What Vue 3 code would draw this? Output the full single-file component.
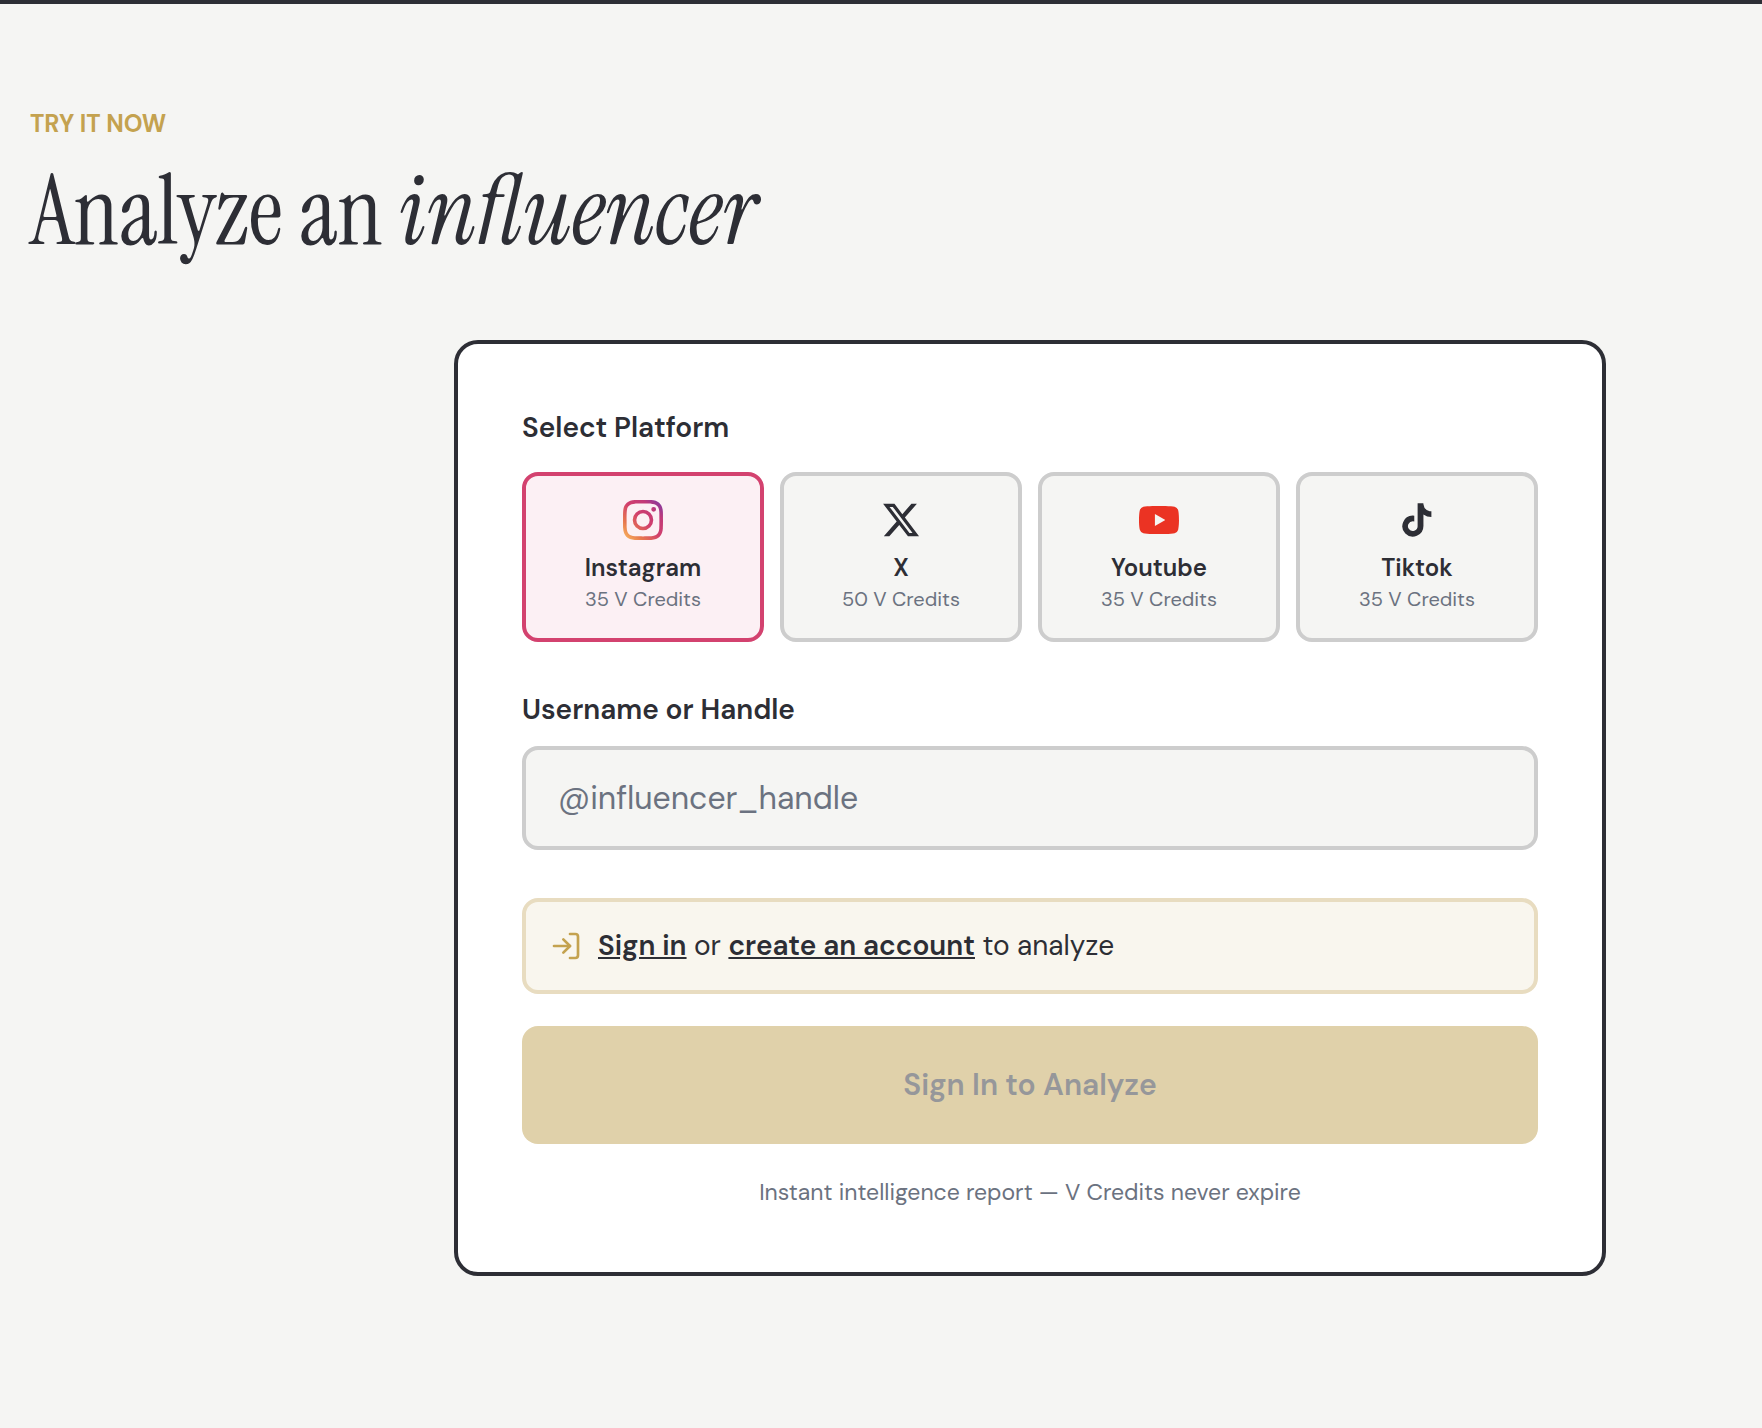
<template>
  <main class="page">
    <section class="analyze">
      <header class="section-header">
        <p class="eyebrow">TRY IT NOW</p>
        <h2 class="title">Analyze an <em>influencer</em></h2>
      </header>

      <form class="card" @submit.prevent>
        <div class="group-label" id="platform-label">Select Platform</div>
        <div class="platforms" role="group" aria-labelledby="platform-label">
          <button
            v-for="platform in platforms"
            :key="platform.id"
            type="button"
            class="platform"
            :class="{ active: selected === platform.id }"
            :aria-pressed="selected === platform.id"
            @click="selected = platform.id"
          >
            <svg class="platform-icon" :class="platform.id" viewBox="0 0 24 24" aria-hidden="true">
              <defs v-if="platform.id === 'instagram'">
                <linearGradient id="ig-gradient" x1="0%" y1="100%" x2="100%" y2="0%">
                  <stop offset="0%" stop-color="#fcc05f" />
                  <stop offset="25%" stop-color="#e7774f" />
                  <stop offset="50%" stop-color="#d2406c" />
                  <stop offset="75%" stop-color="#c23a78" />
                  <stop offset="100%" stop-color="#7238ac" />
                </linearGradient>
              </defs>
              <path :d="platform.icon" />
            </svg>
            <span class="platform-name">{{ platform.name }}</span>
            <span class="platform-cost">{{ platform.cost }} V Credits</span>
          </button>
        </div>

        <label class="group-label handle-label" for="handle">Username or Handle</label>
        <input id="handle" v-model="handle" class="handle-input" type="text" placeholder="@influencer_handle" />

        <div class="notice">
          <svg class="notice-icon" viewBox="0 0 24 24" fill="none" stroke="currentColor" stroke-width="2" stroke-linecap="round" stroke-linejoin="round" aria-hidden="true">
            <path d="M15 3h4a2 2 0 0 1 2 2v14a2 2 0 0 1-2 2h-4"></path>
            <polyline points="10 17 15 12 10 7"></polyline>
            <line x1="15" y1="12" x2="3" y2="12"></line>
          </svg>
          <p><a href="#signin">Sign in</a> or <a href="#signup">create an account</a> to analyze</p>
        </div>

        <button class="submit-btn" type="submit" disabled>Sign In to Analyze</button>
        <p class="footnote">Instant intelligence report — V Credits never expire</p>
      </form>
    </section>
  </main>
</template>

<script setup>
import { ref } from 'vue'

const selected = ref('instagram')
const handle = ref('')

const platforms = [
  {
    id: 'instagram',
    name: 'Instagram',
    cost: 35,
    icon: 'M12 2.163c3.204 0 3.584.012 4.85.07 3.252.148 4.771 1.691 4.919 4.919.058 1.265.069 1.645.069 4.849 0 3.205-.012 3.584-.069 4.849-.149 3.225-1.664 4.771-4.919 4.919-1.266.058-1.644.07-4.85.07-3.204 0-3.584-.012-4.849-.07-3.26-.149-4.771-1.699-4.919-4.92-.058-1.265-.07-1.644-.07-4.849 0-3.204.013-3.583.07-4.849.149-3.227 1.664-4.771 4.919-4.919 1.266-.057 1.645-.069 4.849-.069zM12 0C8.741 0 8.333.014 7.053.072 2.695.272.273 2.69.073 7.052.014 8.333 0 8.741 0 12c0 3.259.014 3.668.072 4.948.2 4.358 2.618 6.78 6.98 6.98C8.333 23.986 8.741 24 12 24c3.259 0 3.668-.014 4.948-.072 4.354-.2 6.782-2.618 6.979-6.98.059-1.28.073-1.689.073-4.948 0-3.259-.014-3.667-.072-4.947-.196-4.354-2.617-6.78-6.979-6.98C15.668.014 15.259 0 12 0zm0 5.838a6.162 6.162 0 1 0 0 12.324 6.162 6.162 0 0 0 0-12.324zM12 16a4 4 0 1 1 0-8 4 4 0 0 1 0 8zm6.406-11.845a1.44 1.44 0 1 0 0 2.881 1.44 1.44 0 0 0 0-2.881z'
  },
  {
    id: 'x',
    name: 'X',
    cost: 50,
    icon: 'M18.244 2.25h3.308l-7.227 8.26 8.502 11.24H16.17l-5.214-6.817L4.99 21.75H1.68l7.73-8.835L1.254 2.25H8.08l4.713 6.231zm-1.161 17.52h1.833L7.084 4.126H5.117z'
  },
  {
    id: 'youtube',
    name: 'Youtube',
    cost: 35,
    icon: 'M23.498 6.186a3.016 3.016 0 0 0-2.122-2.136C19.505 3.545 12 3.545 12 3.545s-7.505 0-9.377.505A3.017 3.017 0 0 0 .502 6.186C0 8.07 0 12 0 12s0 3.93.502 5.814a3.016 3.016 0 0 0 2.122 2.136c1.871.505 9.376.505 9.376.505s7.505 0 9.377-.505a3.015 3.015 0 0 0 2.122-2.136C24 15.93 24 12 24 12s0-3.93-.502-5.814zM9.545 15.568V8.432L15.818 12l-6.273 3.568z'
  },
  {
    id: 'tiktok',
    name: 'Tiktok',
    cost: 35,
    icon: 'M19.59 6.69a4.83 4.83 0 0 1-3.77-4.25V2h-3.45v13.67a2.89 2.89 0 0 1-5.2 1.74 2.89 2.89 0 0 1 2.31-4.64 2.93 2.93 0 0 1 .88.13V9.4a6.84 6.84 0 0 0-1-.05A6.33 6.33 0 0 0 5 20.1a6.34 6.34 0 0 0 10.86-4.43v-7a8.16 8.16 0 0 0 4.77 1.52v-3.4a4.85 4.85 0 0 1-1-.1z'
  }
]
</script>

<style>
body {
  background: #f5f5f3;
}
</style>

<style scoped>
.page {
  box-sizing: border-box;
  min-height: 100vh;
  border-top: 4px solid #2d2e35;
  background: #f5f5f3;
  color: #2d2e35;
  font-family: "DM Sans", Inter, "Liberation Sans", sans-serif;
}

.analyze {
  padding: 100px 30px 152px;
}

.eyebrow {
  margin: 0 0 20px;
  color: #c4a24f;
  font-size: 24px;
  font-weight: 700;
  line-height: 40px;
}

.title {
  margin: 0 0 80px;
  font-family: "Instrument Serif", "Liberation Serif", serif;
  font-size: 96px;
  font-weight: 400;
  line-height: 96px;
}

.card {
  box-sizing: border-box;
  max-width: 1152px;
  margin: 0 126px 0 auto;
  padding: 64px;
  background: #fff;
  border: 4px solid #2d2e35;
  border-radius: 24px;
}

.group-label {
  display: block;
  margin-bottom: 24px;
  font-size: 28px;
  font-weight: 600;
  line-height: 40px;
}

.handle-label {
  margin: 48px 0 16px;
}

.platforms {
  display: grid;
  grid-template-columns: repeat(4, 1fr);
  gap: 16px;
}

.platform {
  display: flex;
  flex-direction: column;
  align-items: center;
  padding: 24px 16px;
  background: #f5f5f3;
  border: 4px solid #cdcdcd;
  border-radius: 16px;
  color: inherit;
  font-family: inherit;
  cursor: pointer;
}

.platform.active {
  background: #fcf0f4;
  border-color: #d3426f;
}

.platform-icon {
  width: 40px;
  height: 40px;
  margin-bottom: 12px;
  fill: currentColor;
}

.platform-icon.instagram {
  fill: url(#ig-gradient);
}

.platform-icon.youtube {
  fill: #eb3323;
}

.platform-name {
  font-size: 24px;
  font-weight: 600;
  line-height: 32px;
}

.platform-cost {
  color: #6b7280;
  font-size: 20px;
  line-height: 30px;
}

.handle-input {
  box-sizing: border-box;
  display: block;
  width: 100%;
  padding: 24px 32px;
  background: #f5f5f3;
  border: 4px solid #cdcdcd;
  border-radius: 16px;
  color: inherit;
  font-family: inherit;
  font-size: 32px;
  line-height: 48px;
}

.handle-input::placeholder {
  color: #6b7280;
  opacity: 1;
}

.notice {
  display: flex;
  align-items: center;
  gap: 16px;
  margin-top: 48px;
  padding: 24px;
  background: #f9f6ee;
  border: 4px solid #e8dcc0;
  border-radius: 16px;
  font-size: 28px;
  line-height: 40px;
}

.notice p {
  margin: 0;
}

.notice a {
  color: inherit;
  font-weight: 600;
  text-decoration: underline;
}

.notice-icon {
  flex-shrink: 0;
  width: 32px;
  height: 32px;
  color: #c4a24f;
}

.submit-btn {
  display: block;
  width: 100%;
  margin-top: 32px;
  padding: 36px;
  background: #e0d1aa;
  border: none;
  border-radius: 16px;
  color: #96979a;
  font-family: inherit;
  font-size: 30px;
  font-weight: 600;
  line-height: 46px;
}

.footnote {
  margin: 32px 0 0;
  color: #6b7280;
  font-size: 23px;
  line-height: 32px;
  text-align: center;
}
</style>
